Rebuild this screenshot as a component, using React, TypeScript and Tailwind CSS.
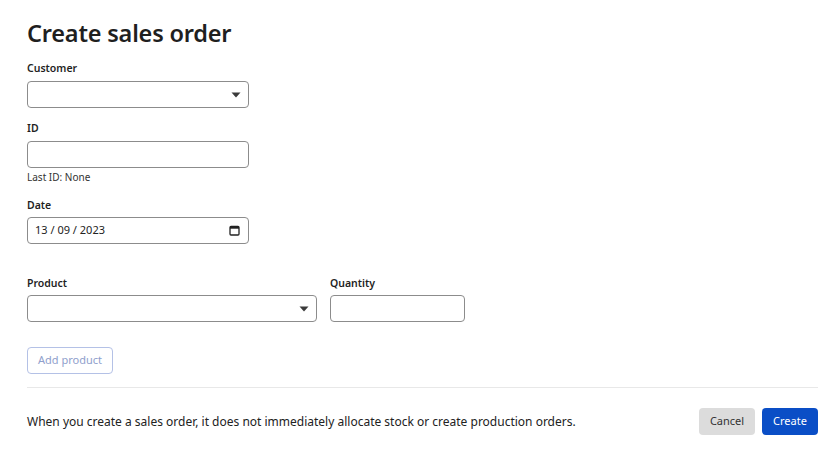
const font = { fontFamily: '"Noto Sans", "Liberation Sans", sans-serif' };

function Caret() {
  return (
    <svg width="10" height="6" viewBox="0 0 10 6" className="shrink-0">
      <path d="M0.5 0.5 L9.5 0.5 L5 5.5 Z" fill="#3a3a3a" />
    </svg>
  );
}

function CalendarIcon() {
  return (
    <svg width="11" height="11" viewBox="0 0 11 11" className="shrink-0">
      <rect x="1" y="1.5" width="9" height="8.5" rx="1" fill="none" stroke="#222" strokeWidth="1.3" />
      <rect x="1" y="1.5" width="9" height="2.2" fill="#222" />
    </svg>
  );
}

function Label({ children }: { children: React.ReactNode }) {
  return <div className="text-[10.5px] leading-[16px] font-semibold text-[#1f1f1f]">{children}</div>;
}

function Box({ className = "", children }: { className?: string; children?: React.ReactNode }) {
  return (
    <div
      className={
        "h-[27px] rounded-[4px] border border-[#8c8c8c] bg-white flex items-center justify-between px-[8px] " +
        className
      }
    >
      {children}
    </div>
  );
}

export default function App() {
  return (
    <div className="min-h-screen bg-white pl-[27px] pr-[22px] pt-[18px] text-[#1f1f1f]" style={font}>
      <h1 className="text-[23.5px] leading-[30px] font-semibold tracking-[-0.2px]">Create sales order</h1>

      <div className="mt-[12px]">
        <Label>Customer</Label>
        <Box className="mt-[5px] w-[222px] pr-[7px]">
          <span />
          <Caret />
        </Box>
      </div>

      <div className="mt-[12px]">
        <Label>ID</Label>
        <Box className="mt-[5px] w-[222px]" />
        <div className="mt-[2px] text-[10px] leading-[14px] text-[#333]">Last ID: None</div>
      </div>

      <div className="mt-[13px]">
        <Label>Date</Label>
        <Box className="mt-[4px] w-[222px] pl-[7px] pr-[8px]">
          <span className="text-[11px] text-[#222]">13 / 09 / 2023</span>
          <CalendarIcon />
        </Box>
      </div>

      <div className="mt-[31px] flex gap-[13px]">
        <div>
          <Label>Product</Label>
          <Box className="mt-[4px] w-[290px] pr-[7px]">
            <span />
            <Caret />
          </Box>
        </div>
        <div>
          <Label>Quantity</Label>
          <Box className="mt-[4px] w-[135px]" />
        </div>
      </div>

      <button className="mt-[25px] h-[27px] w-[86px] rounded-[4px] border border-[#b4c1e6] bg-white text-[11px] text-[#8fa0cc]">
        Add product
      </button>

      <div className="mt-[13px] h-px bg-[#e8e8e8]" />

      <div className="mt-[20px] flex items-center justify-between">
        <p className="text-[12px] text-[#222]">
          When you create a sales order, it does not immediately allocate stock or create production orders.
        </p>
        <div className="flex gap-[7px]">
          <button className="h-[27px] w-[56px] rounded-[4px] bg-[#dcdcdc] text-[11px] text-[#333]">Cancel</button>
          <button className="h-[27px] w-[56px] rounded-[4px] bg-[#0a4ec6] text-[11px] text-white">Create</button>
        </div>
      </div>
    </div>
  );
}
